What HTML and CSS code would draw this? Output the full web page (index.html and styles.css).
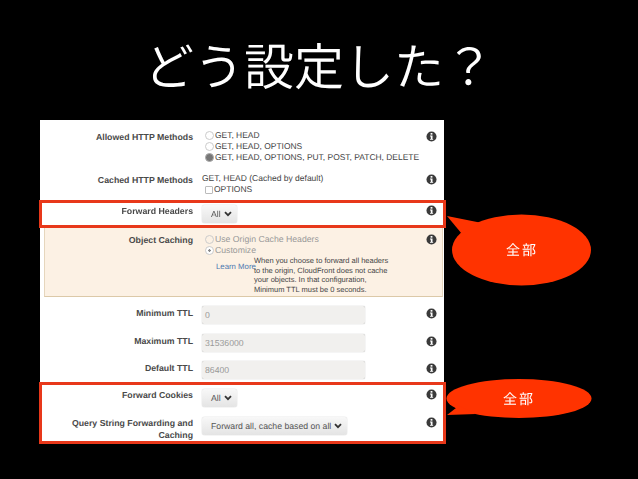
FILE: index.html
```html
<!DOCTYPE html>
<html>
<head>
    <meta name="viewport" content="width=device-width, initial-scale=1">
    <link rel="icon" href="data:,">
    <link rel="stylesheet" href="styles.css">
</head>
<body>
    <svg width="0" height="0" class="defs">
        <symbol id="info" viewBox="0 0 12 12">
            <circle cx="6" cy="6" r="5.5" fill="#3a3a3a"/>
            <rect x="5" y="2.2" width="2" height="1.8" fill="#fff"/>
            <path d="M4.4 5h2.7v3.6h.7v1H4.4v-1h.8V6h-.8z" fill="#fff"/>
        </symbol>
        <symbol id="chev" viewBox="0 0 8 6">
            <path d="M1 1.2l3 3 3-3" fill="none" stroke="#333" stroke-width="1.8"/>
        </symbol>
    </svg>

    <h1 class="title">どう設定した？</h1>

    <div class="panel">
        <div class="row row-allowed">
            <div class="label">Allowed HTTP Methods</div>
            <div class="value">
                <div class="opt"><span class="radio"></span>GET, HEAD</div>
                <div class="opt"><span class="radio"></span>GET, HEAD, OPTIONS</div>
                <div class="opt"><span class="radio checked"></span>GET, HEAD, OPTIONS, PUT, POST, PATCH, DELETE</div>
            </div>
            <svg class="info"><use href="#info"/></svg>
        </div>
        <div class="row row-cached">
            <div class="label">Cached HTTP Methods</div>
            <div class="value">
                <div class="opt">GET, HEAD (Cached by default)</div>
                <div class="opt"><span class="check"></span>OPTIONS</div>
            </div>
            <svg class="info"><use href="#info"/></svg>
        </div>
        <div class="group group-headers">
            <div class="row">
                <div class="label">Forward Headers</div>
                <div class="value"><span class="select">All<svg class="chev"><use href="#chev"/></svg></span></div>
                <svg class="info"><use href="#info"/></svg>
            </div>
        </div>
        <div class="caching">
            <div class="row">
                <div class="label">Object Caching</div>
                <div class="value muted">
                    <div class="opt"><span class="radio"></span>Use Origin Cache Headers</div>
                    <div class="opt"><span class="radio dot"></span>Customize</div>
                    <div class="note">
                        <a class="learn">Learn More</a>
                        <p>When you choose to forward all headers<br>to the origin, CloudFront does not cache<br>your objects. In that configuration,<br>Minimum TTL must be 0 seconds.</p>
                    </div>
                </div>
                <svg class="info"><use href="#info"/></svg>
            </div>
        </div>
        <div class="ttls">
            <div class="row">
                <div class="label">Minimum TTL</div>
                <div class="value"><div class="input">0</div></div>
                <svg class="info"><use href="#info"/></svg>
            </div>
            <div class="row">
                <div class="label">Maximum TTL</div>
                <div class="value"><div class="input">31536000</div></div>
                <svg class="info"><use href="#info"/></svg>
            </div>
            <div class="row">
                <div class="label">Default TTL</div>
                <div class="value"><div class="input">86400</div></div>
                <svg class="info"><use href="#info"/></svg>
            </div>
        </div>
        <div class="group group-cookies">
            <div class="row">
                <div class="label">Forward Cookies</div>
                <div class="value"><span class="select">All<svg class="chev"><use href="#chev"/></svg></span></div>
                <svg class="info"><use href="#info"/></svg>
            </div>
            <div class="row">
                <div class="label">Query String Forwarding and Caching</div>
                <div class="value"><span class="select">Forward all, cache based on all<svg class="chev"><use href="#chev"/></svg></span></div>
                <svg class="info"><use href="#info"/></svg>
            </div>
        </div>
    </div>

    <div class="callout callout-top">
        <svg width="146" height="72" viewBox="0 0 146 72">
            <ellipse cx="75.500" cy="36" rx="69.500" ry="35.500" fill="#ff3300"/>
            <path d="M1 2L36 9 16 20z" fill="#ff3300"/>
        </svg>
        <span>全部</span>
    </div>
    <div class="callout callout-bottom">
        <svg width="146" height="40" viewBox="0 0 146 40">
            <ellipse cx="73" cy="19.500" rx="72.500" ry="19.500" fill="#ff3300"/>
            <path d="M1 36L10 29 3 22 30 35z" fill="#ff3300"/>
        </svg>
        <span>全部</span>
    </div>
</body>
</html>
```

FILE: styles.css
```css
html, body {
    margin: 0;
    height: 479px;
    overflow: hidden;
    background-color: #000;
}

body {
    position: relative;
    font-family: 'Liberation Sans', Arial, sans-serif;
    text-rendering: geometricPrecision;
}

.defs {
    position: absolute;
}

.title {
    margin: 0;
    height: 120px;
    padding-top: 30px;
    box-sizing: border-box;
    text-align: center;
    color: #fff;
    font-family: 'Noto Sans CJK JP', sans-serif;
    font-size: 50px;
    font-weight: 350;
    line-height: 68px;
}

.panel {
    width: 404px;
    height: 324px;
    margin-left: 40px;
    background-color: #fff;
    color: #444;
    font-size: 8.700px;
    filter: blur(0.4px);
}

.row {
    display: grid;
    grid-template-columns: 153px minmax(0, 1fr) 12px;
    column-gap: 9px;
    padding-right: 6px;
}

.label {
    text-align: right;
    font-weight: bold;
    font-size: 8.750px;
    line-height: 12px;
    color: #4a4a4a;
}

.info {
    width: 11px;
    height: 11px;
}

.opt {
    display: flex;
    align-items: center;
    height: 11px;
    line-height: 11px;
    white-space: nowrap;
}

.radio {
    flex: none;
    width: 9px;
    height: 9px;
    margin-left: 3px;
    margin-right: 1px;
    box-sizing: border-box;
    border: 1px solid #ccc;
    border-radius: 50%;
}

.radio.checked {
    background-color: #777;
    border-color: #aaa;
}

.radio.dot {
    background: radial-gradient(circle, #888 0 1px, #fff 1.500px);
}

.check {
    flex: none;
    width: 8px;
    height: 8px;
    margin-left: 3px;
    margin-right: 1px;
    box-sizing: border-box;
    border: 1px solid #bbb;
    border-radius: 1px;
}

.row-allowed {
    padding-top: 10px;
    height: 53px;
    box-sizing: border-box;
    font-size: 8.450px;
}

.row-cached {
    height: 27px;
    box-sizing: border-box;
    font-size: 8.500px;
}

.row-allowed .label,
.row-cached .label {
    padding-top: 1px;
}

.row-allowed .info,
.row-cached .info {
    margin-top: 1px;
}

.group {
    margin: 0 -2px 0 -1px;
    border: 3px solid #e8381a;
    box-sizing: border-box;
}

.group-headers {
    height: 28px;
    margin-bottom: -1px;
    padding-top: 2px;
    position: relative;
}

.group .row {
    grid-template-columns: 151px minmax(0, 1fr) 12px;
    padding-right: 5px;
}

.select {
    display: inline-flex;
    align-items: center;
    height: 18px;
    padding: 0 3px 0 9px;
    border-radius: 3px;
    background: linear-gradient(#f8f8f8, #e4e4e4);
    box-shadow: 0 0 1px #999;
    color: #555;
}

.chev {
    width: 8px;
    height: 6px;
    margin-left: 3px;
    margin-right: 2px;
}

.caching {
    height: 70px;
    margin: 0 1px 0 4px;
    padding-top: 7px;
    box-sizing: border-box;
    background-color: #fcf1e4;
    border-left: 1px solid #e6d6bd;
    border-right: 1px solid #e6d6bd;
    border-bottom: 1px solid #dcc9a8;
}

.caching .row {
    grid-template-columns: 148px minmax(0, 1fr) 12px;
    padding-right: 4px;
}

.muted .opt {
    color: #999;
}

.note {
    display: flex;
    align-items: flex-start;
    font-size: 7.500px;
    line-height: 9.500px;
    color: #444;
}

.learn {
    width: 38px;
    margin-left: 14px;
    margin-top: 6px;
    flex: none;
    color: #4a78b0;
    font-size: 7.800px;
    white-space: nowrap;
}

.note p {
    margin: 0;
    white-space: nowrap;
}

.ttls {
    height: 85px;
    padding-top: 9px;
    box-sizing: border-box;
}

.ttls .row {
    height: 27.500px;
}

.ttls .label {
    padding-top: 1px;
}

.ttls .info {
    margin-top: 2px;
}

.input {
    width: 163px;
    height: 18px;
    padding-left: 3px;
    box-sizing: border-box;
    border-radius: 2px;
    background-color: #f1f0ee;
    box-shadow: 0 0 1px #999;
    color: #999;
    line-height: 19px;
}

.group-cookies {
    height: 62px;
    padding-top: 4px;
}

.group-cookies .row:first-child {
    height: 28px;
}

.callout {
    position: absolute;
    color: #fff;
    font-family: 'Noto Sans CJK JP', sans-serif;
    font-size: 14px;
    letter-spacing: 2px;
}

.callout svg {
    display: block;
}

.callout span {
    position: absolute;
    top: 50%;
    transform: translateY(-50%);
    line-height: 20px;
}

.callout-top {
    left: 446px;
    top: 214px;
}

.callout-top span {
    left: 60px;
}

.callout-bottom {
    left: 446px;
    top: 379px;
}

.callout-bottom span {
    left: 57px;
}
```
